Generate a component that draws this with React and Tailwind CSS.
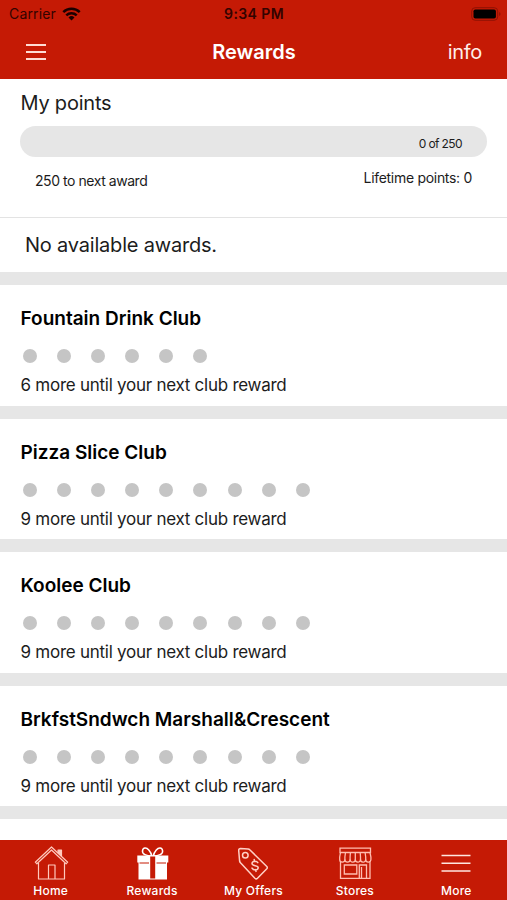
const CLUBS = [
  { name: 'Fountain Drink Club', remaining: 6 },
  { name: 'Pizza Slice Club', remaining: 9 },
  { name: 'Koolee Club', remaining: 9 },
  { name: 'BrkfstSndwch Marshall&Crescent', remaining: 9 },
];

const HomeIcon = () => (
  <svg width="36" height="36" viewBox="0 0 36 36" fill="none" stroke="#ffc9bd" strokeWidth="1.2" strokeLinejoin="round">
    <path d="M18.500 2 2.300 17.200l1.600 1.600L18.500 5l14.600 13.800 1.600-1.600L18.500 2Z" />
    <path d="M25 7.500V5h3.500v6Z" fill="#ffc9bd" />
    <path d="M5.500 18V34h26V18M15.500 34V20h6.500v14" />
  </svg>
);

const GiftIcon = () => (
  <svg width="36" height="36" viewBox="0 0 36 36" fill="none">
    <path d="M17.800 11C12.500 11 8 9 8.500 5.800 9 2.300 12.500 2.300 14.800 5c1.700 2 2.700 4.500 3 6Zm1.500 0c5.300 0 9.800-2 9.300-5.200-.5-3.500-4-3.500-6.300-.8-1.700 2-2.700 4.500-3 6Z" stroke="white" strokeWidth="1.500" />
    <path d="M3.300 10.500h31v7H33V34.500H4.500v-17H3.300Z" fill="white" />
    <path d="M5.500 18h9.500M22.500 18H32" stroke="#c51a05" strokeWidth="1" />
    <path d="M16.200 11.500h5v22h-5z" fill="#c51a05" />
  </svg>
);

const OffersIcon = () => (
  <svg width="36" height="36" viewBox="0 0 36 36" fill="none" stroke="#ffd0c6" strokeWidth="1.500" strokeLinejoin="round" strokeLinecap="round">
    <path d="M3.700 5.500Q3.700 3.600 5.500 3.600l7.500.5q1.200.1 2 .9L31.800 21.500q1 1.200 0 2.300l-9.300 9.500q-1.300 1.200-2.600 0L5.500 17.800q-.7-.8-.9-1.800Z" />
    <circle cx="10.300" cy="10.200" r="2.800" />
    <path d="M22.800 17.700c-1.200-2.200-5.600-1.900-5.800.8-.2 3.400 6.400 1 6.200 4.300-.2 2.800-4.800 2.800-6.200.3M19.200 14.500l.5 2M20.500 24.600l.5 1.800" />
  </svg>
);

const StoreIcon = () => (
  <svg width="36" height="36" viewBox="0 0 36 36" fill="none" stroke="#ffbdb0" strokeWidth="1.300">
    <path d="M3 3.200h30.500v4.300H3zM3.500 16V33.300h29.500V16" />
    <path d="M3.500 7.500 2.700 12v2.500a2.600 2.600 0 0 0 5.200 0 2.600 2.600 0 0 0 5.200 0 2.600 2.600 0 0 0 5.200 0 2.600 2.600 0 0 0 5.200 0 2.600 2.600 0 0 0 5.200 0 2.600 2.600 0 0 0 5.200 0V12l-.9-4.500" />
    <path d="M8.500 7.500 7.900 12v3M13.400 7.500 13.100 12v3M18.300 7.500V15M23.200 7.500l.3 4.500v3M28.100 7.500l.6 4.500v3" />
    <path d="M7.300 20h12.500v9H7.300zM22.300 33.500V20h7.200v13.500M24.500 22v11.500" />
  </svg>
);

const MoreIcon = () => (
  <svg width="36" height="36" viewBox="0 0 36 36" fill="none" stroke="#ffe6e0" strokeWidth="1.400">
    <path d="M3.500 10.500h29M3.500 18.200h29M3.500 26h29" />
  </svg>
);

const TABS = [
  { label: 'Home', icon: HomeIcon },
  { label: 'Rewards', icon: GiftIcon },
  { label: 'My Offers', icon: OffersIcon },
  { label: 'Stores', icon: StoreIcon },
  { label: 'More', icon: MoreIcon },
];

function StatusBar() {
  return (
    <div className="grid h-[27px] grid-cols-3 items-center pl-[9px] pr-[6px] text-[14px] leading-none text-[#330300]">
      <div className="flex items-center gap-[6px]">
        <span className="tracking-[0.15px]">Carrier</span>
        <svg width="19" height="14" viewBox="0 0 19 14" fill="none" stroke="#1c0000" strokeWidth="2.500">
          <path d="M1.300 5.200a11.600 11.600 0 0 1 16.400 0M4.300 8.300a7.400 7.400 0 0 1 10.400 0" />
          <path d="M9.500 13.500 6.500 10.400a4.300 4.300 0 0 1 6 0Z" fill="#1c0000" stroke="none" />
        </svg>
      </div>
      <span className="-ml-[2px] text-center font-semibold tracking-[0.4px]">9:34 PM</span>
      <svg className="justify-self-end" width="30" height="14" viewBox="0 0 30 14">
        <rect x="0.700" y="0.700" width="26" height="12.600" rx="3.500" fill="none" stroke="#8f1204" />
        <rect x="2.500" y="2.500" width="22.400" height="9" rx="1.800" fill="#000" />
        <path d="M28.200 5v4q1.300-.6 1.300-2t-1.300-2Z" fill="#8f1204" />
      </svg>
    </div>
  );
}

function ClubCard({ name, remaining }) {
  return (
    <div className="h-[133.6px] shrink-0 border-b-[13.5px] border-[#e6e6e6] pl-[20.5px] pt-[20px]">
      <h2 className="text-[19px] font-semibold leading-[27px] text-black">{name}</h2>
      <div className="mt-[17px] flex gap-[20.200px] pl-[2px]">
        {Array.from({ length: remaining }, (_, i) => (
          <span key={i} className="size-[14px] rounded-full bg-[#c5c5c5]" />
        ))}
      </div>
      <p className="mt-[10px] text-[17px] leading-[24px] tracking-[-0.260px]">
        {remaining} more until your next club reward
      </p>
    </div>
  );
}

export default function App() {
  return (
    <div className="flex h-[900px] w-[507px] flex-col overflow-hidden bg-white font-['Inter',sans-serif] text-[#1c1c1c]">
      <header className="h-[79px] shrink-0 bg-[#c51a05]">
        <StatusBar />
        <div className="grid h-[50px] grid-cols-3 items-center pl-[26px] pr-[25px] text-white">
          <div className="flex w-[20px] flex-col gap-[5px]">
            <span className="h-[2px] bg-[#ffdcd4]" />
            <span className="h-[2px] bg-[#ffdcd4]" />
            <span className="h-[2px] bg-[#ffdcd4]" />
          </div>
          <h1 className="text-center text-[20px] font-semibold">Rewards</h1>
          <span className="text-right text-[20px] tracking-[-0.3px] text-[#ffeeea]">info</span>
        </div>
      </header>

      <main className="flex min-h-0 flex-1 flex-col overflow-hidden">
        {/* Points progress */}
        <section className="h-[138.500px] shrink-0 border-b border-[#e3e3e3] px-[20px] pt-[11px]">
          <h2 className="pl-[0.500px] text-[20px] leading-[26px] tracking-[-0.220px]">My points</h2>
          <div className="mt-[10px] flex h-[31px] items-center justify-end rounded-full bg-[#e6e6e6] pr-[25px] pt-[5px] text-[12px] tracking-[-0.600px]">
            0 of 250
          </div>
          <div className="flex justify-between pl-[15px] pr-[15px] text-[14px] leading-[20px]">
            <span className="mt-[14px] tracking-[-0.450px]">250 to next award</span>
            <span className="mt-[11px] tracking-[-0.300px]">Lifetime points: 0</span>
          </div>
        </section>

        <p className="h-[67.500px] shrink-0 border-b-[13.5px] border-[#e6e6e6] pl-[25px] pt-[14px] text-[20px] leading-[27px] tracking-[-0.200px]">
          No available awards.
        </p>

        {CLUBS.map((club) => (
          <ClubCard key={club.name} {...club} />
        ))}
      </main>

      <nav className="grid h-[60px] shrink-0 grid-cols-5 bg-[#c51a05]">
        {TABS.map(({ label, icon: Icon }) => (
          <div key={label} className="flex flex-col items-center pt-[5px] text-white">
            <Icon />
            <span className="mt-[3px] text-[12px] font-medium leading-[14px] tracking-[0.250px]">{label}</span>
          </div>
        ))}
      </nav>
    </div>
  );
}
